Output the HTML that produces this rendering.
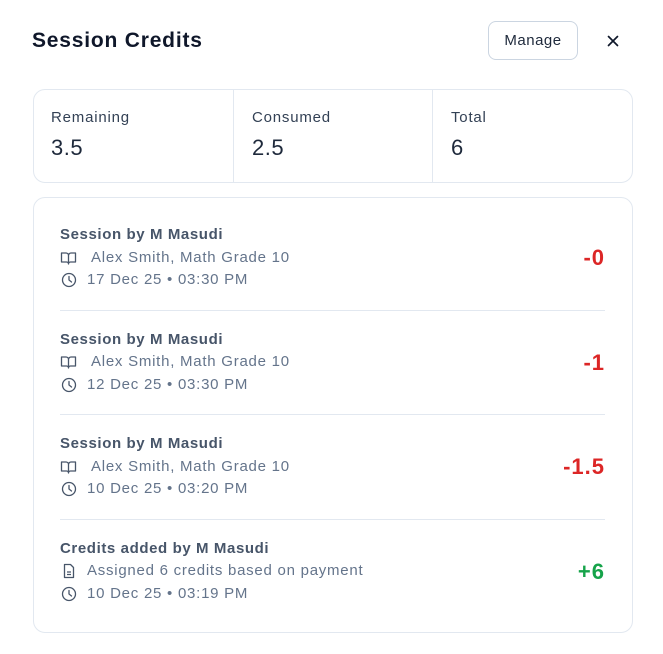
<!DOCTYPE html><html><head><style>
body{margin:0;width:663px;height:654px;background:#fff;font-family:"Liberation Sans",sans-serif;position:relative;overflow:hidden}
.a{position:absolute;white-space:nowrap}
.card{position:absolute;left:33px;width:598px;border:1px solid #e2e8f0;border-radius:12px;background:#fff}
.lab{font-size:15px;color:#334155;letter-spacing:0.8px}
.val{font-size:22px;color:#1e293b;font-weight:500;letter-spacing:0.5px}
.t{font-size:15px;font-weight:bold;color:#475569;letter-spacing:0.6px}
.s{font-size:15px;color:#64748b;letter-spacing:0.75px}
.amt{font-size:22px;font-weight:bold;right:58px;letter-spacing:1px}
.sep{position:absolute;left:60px;width:545px;height:1px;background:#e2e8f0}
svg{position:absolute}
</style></head><body>
<div class="a" style="left:32px;top:29px;font-size:21px;font-weight:bold;color:#0f172a;letter-spacing:0.8px">Session Credits</div>
<div class="a" style="left:488px;top:21px;width:90px;height:39px;border:1px solid #cbd5e1;border-radius:8px;box-sizing:border-box;font-size:15px;color:#1e293b;text-align:center;line-height:37px;letter-spacing:0.5px">Manage</div>
<svg style="left:607px;top:35px" width="12" height="12" viewBox="0 0 12 12"><path d="M1.5 1.5L10.5 10.5M10.5 1.5L1.5 10.5" stroke="#0f172a" stroke-width="1.7" stroke-linecap="round"/></svg>
<div class="card" style="top:89px;height:92px"></div>
<div style="position:absolute;left:233px;top:90px;width:1px;height:92px;background:#e2e8f0"></div>
<div style="position:absolute;left:432px;top:90px;width:1px;height:92px;background:#e2e8f0"></div>
<div class="a lab" style="left:51px;top:109px">Remaining</div><div class="a val" style="left:51px;top:135px">3.5</div>
<div class="a lab" style="left:252px;top:109px">Consumed</div><div class="a val" style="left:252px;top:135px">2.5</div>
<div class="a lab" style="left:451px;top:109px">Total</div><div class="a val" style="left:451px;top:135px">6</div>
<div class="card" style="top:197px;height:434px"></div>
<div class="sep" style="top:310px"></div><div class="sep" style="top:414px"></div><div class="sep" style="top:519px"></div>
<div class="a t" style="left:60px;top:226px">Session by M Masudi</div>
<div class="a s" style="left:91px;top:249px">Alex Smith, Math Grade 10</div>
<div class="a s" style="left:87px;top:271px">17 Dec 25 • 03:30 PM</div>
<div class="a amt" style="top:245px;color:#dc2626">-0</div>
<div class="a t" style="left:60px;top:331px">Session by M Masudi</div>
<div class="a s" style="left:91px;top:353px">Alex Smith, Math Grade 10</div>
<div class="a s" style="left:87px;top:376px">12 Dec 25 • 03:30 PM</div>
<div class="a amt" style="top:350px;color:#dc2626">-1</div>
<div class="a t" style="left:60px;top:435px">Session by M Masudi</div>
<div class="a s" style="left:91px;top:458px">Alex Smith, Math Grade 10</div>
<div class="a s" style="left:87px;top:480px">10 Dec 25 • 03:20 PM</div>
<div class="a amt" style="top:454px;color:#dc2626">-1.5</div>
<div class="a t" style="left:60px;top:540px">Credits added by M Masudi</div>
<div class="a s" style="left:87px;top:562px">Assigned 6 credits based on payment</div>
<div class="a s" style="left:87px;top:585px">10 Dec 25 • 03:19 PM</div>
<div class="a amt" style="top:559px;color:#16a34a">+6</div>
<svg style="left:60px;top:250px" width="17" height="16" viewBox="0 0 17 16"><path d="M1.5 3h4.5a2.5 2.5 0 0 1 2.5 2.5V14a2 2 0 0 0-2-2H1.5zM15.5 3H11a2.5 2.5 0 0 0-2.5 2.5V14a2 2 0 0 1 2-2h5z" fill="none" stroke="#475569" stroke-width="1.3" stroke-linejoin="round"/></svg>
<svg style="left:60px;top:354px" width="17" height="16" viewBox="0 0 17 16"><path d="M1.5 3h4.5a2.5 2.5 0 0 1 2.5 2.5V14a2 2 0 0 0-2-2H1.5zM15.5 3H11a2.5 2.5 0 0 0-2.5 2.5V14a2 2 0 0 1 2-2h5z" fill="none" stroke="#475569" stroke-width="1.3" stroke-linejoin="round"/></svg>
<svg style="left:60px;top:459px" width="17" height="16" viewBox="0 0 17 16"><path d="M1.5 3h4.5a2.5 2.5 0 0 1 2.5 2.5V14a2 2 0 0 0-2-2H1.5zM15.5 3H11a2.5 2.5 0 0 0-2.5 2.5V14a2 2 0 0 1 2-2h5z" fill="none" stroke="#475569" stroke-width="1.3" stroke-linejoin="round"/></svg>
<svg style="left:61px;top:272px" width="16" height="16" viewBox="0 0 16 16"><circle cx="8" cy="8" r="6.5" fill="none" stroke="#475569" stroke-width="1.3"/><path d="M8 4.5V8l2.5 2" fill="none" stroke="#475569" stroke-width="1.3" stroke-linecap="round"/></svg>
<svg style="left:61px;top:377px" width="16" height="16" viewBox="0 0 16 16"><circle cx="8" cy="8" r="6.5" fill="none" stroke="#475569" stroke-width="1.3"/><path d="M8 4.5V8l2.5 2" fill="none" stroke="#475569" stroke-width="1.3" stroke-linecap="round"/></svg>
<svg style="left:61px;top:481px" width="16" height="16" viewBox="0 0 16 16"><circle cx="8" cy="8" r="6.5" fill="none" stroke="#475569" stroke-width="1.3"/><path d="M8 4.5V8l2.5 2" fill="none" stroke="#475569" stroke-width="1.3" stroke-linecap="round"/></svg>
<svg style="left:61px;top:586px" width="16" height="16" viewBox="0 0 16 16"><circle cx="8" cy="8" r="6.5" fill="none" stroke="#475569" stroke-width="1.3"/><path d="M8 4.5V8l2.5 2" fill="none" stroke="#475569" stroke-width="1.3" stroke-linecap="round"/></svg>
<svg style="left:61px;top:563px" width="16" height="16" viewBox="0 0 16 16"><path d="M3.5 1.5h6l3 3v10h-9z" fill="none" stroke="#475569" stroke-width="1.3" stroke-linejoin="round"/><path d="M6 9h4M6 11.5h4" stroke="#475569" stroke-width="1.3"/></svg>
</body></html>
